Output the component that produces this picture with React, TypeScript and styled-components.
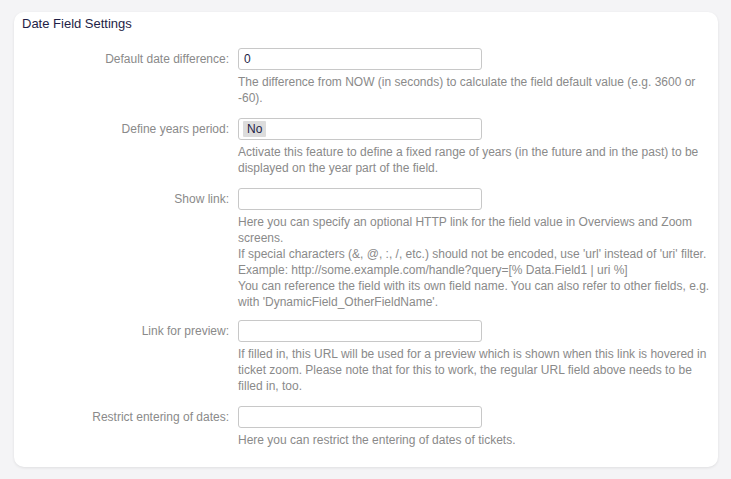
import React from "react";
import styled, { createGlobalStyle } from "styled-components";

const Global = createGlobalStyle`
  html, body {
    margin: 0;
    padding: 0;
    background: #f4f4f6;
    font-family: "Liberation Sans", Arial, sans-serif;
    font-size: 12px;
  }
`;

const Page = styled.div`
  padding: 12px 13px 13px 14px;
`;

const Card = styled.section`
  background: #ffffff;
  border-radius: 10px;
  box-shadow: 0 1px 3px rgba(0, 0, 0, 0.09);
  padding: 4px 6px 19px 0;
`;

const Title = styled.h2`
  margin: 0;
  padding: 0 0 0 8px;
  font-size: 13px;
  font-weight: normal;
  line-height: 16px;
  color: #1e1e46;
`;

const Fields = styled.div`
  display: grid;
  grid-template-columns: 215px 1fr;
  column-gap: 9px;
  padding-top: 16px;
`;

const Row = styled.div`
  display: contents;
`;

const Label = styled.label`
  grid-column: 1;
  text-align: right;
  line-height: 22px;
  color: #8a8a8a;
  white-space: nowrap;
`;

const Control = styled.div<{ $space: number }>`
  grid-column: 2;
  display: flex;
  flex-direction: column;
  gap: 4px;
  margin-bottom: ${(p) => p.$space}px;
`;

const Input = styled.div`
  box-sizing: border-box;
  width: 244px;
  height: 22px;
  border: 1px solid #c8c8c8;
  border-radius: 3px;
  background: #fff;
  display: flex;
  align-items: center;
  padding: 0 5px;
  color: #1e1e46;
  font-size: 12px;
`;

const Chip = styled.span`
  background: #dcdcdc;
  color: #1e1e46;
  padding: 0 4px;
  line-height: 16px;
  border-radius: 1px;
  margin-left: -1px;
`;

const Help = styled.p`
  margin: 0;
  line-height: 16px;
  color: #8a8a8a;
`;

type Field = {
  label: string;
  value?: React.ReactNode;
  help: React.ReactNode;
  space: number;
};

const fields: Field[] = [
  {
    label: "Default date difference:",
    value: "0",
    help: "The difference from NOW (in seconds) to calculate the field default value (e.g. 3600 or -60).",
    space: 12,
  },
  {
    label: "Define years period:",
    value: <Chip>No</Chip>,
    help: "Activate this feature to define a fixed range of years (in the future and in the past) to be displayed on the year part of the field.",
    space: 12,
  },
  {
    label: "Show link:",
    help: (
      <>
        Here you can specify an optional HTTP link for the field value in Overviews and Zoom screens.
        <br />
        If special characters (&amp;, @, :, /, etc.) should not be encoded, use 'url' instead of 'uri' filter.
        <br />
        Example: http://some.example.com/handle?query=[% Data.Field1 | uri %]
        <br />
        You can reference the field with its own field name. You can also refer to other fields, e.g. with
        'DynamicField_OtherFieldName'.
      </>
    ),
    space: 10,
  },
  {
    label: "Link for preview:",
    help: "If filled in, this URL will be used for a preview which is shown when this link is hovered in ticket zoom. Please note that for this to work, the regular URL field above needs to be filled in, too.",
    space: 12,
  },
  {
    label: "Restrict entering of dates:",
    help: "Here you can restrict the entering of dates of tickets.",
    space: 0,
  },
];

export default function App() {
  return (
    <>
      <Global />
      <Page>
        <Card>
          <Title>Date Field Settings</Title>
          <Fields>
            {fields.map((f) => (
              <Row key={f.label}>
                <Label>{f.label}</Label>
                <Control $space={f.space}>
                  <Input>{f.value}</Input>
                  <Help>{f.help}</Help>
                </Control>
              </Row>
            ))}
          </Fields>
        </Card>
      </Page>
    </>
  );
}
